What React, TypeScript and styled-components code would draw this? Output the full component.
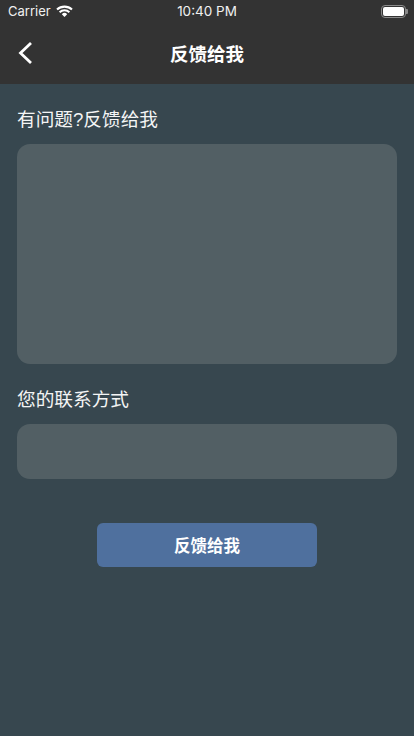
import React from "react";
import styled, { createGlobalStyle } from "styled-components";

const GlobalStyle = createGlobalStyle`
    html, body {
        margin: 0;
        padding: 0;
        background: #37474f;
        font-family: "Liberation Sans", "Noto Sans CJK SC", sans-serif;
    }
    * {
        box-sizing: border-box;
    }
`;

const Page = styled.div`
    width: 414px;
    height: 736px;
    overflow: hidden;
    background: #37474f;
    color: #fff;
`;

const Header = styled.header`
    background: #333333;
    height: 84px;
`;

const StatusBar = styled.div`
    height: 22px;
    padding: 0 8px;
    display: grid;
    grid-template-columns: 1fr auto 1fr;
    align-items: center;
    font-family: "Inter", "Liberation Sans", sans-serif;
    font-size: 13px;
    color: #f0f0f0;
`;

const StatusLeft = styled.div`
    display: flex;
    align-items: center;
    gap: 5px;
`;

const StatusTime = styled.span`
    font-size: 13.5px;
`;

const StatusRight = styled.div`
    display: flex;
    justify-content: flex-end;
`;

const Battery = styled.div`
    width: 25px;
    height: 13px;
    border: 1px solid #8a8a8a;
    border-radius: 4px;
    padding: 1px;
    position: relative;
    &::before {
        content: "";
        display: block;
        height: 100%;
        background: #fff;
        border-radius: 2px;
    }
    &::after {
        content: "";
        position: absolute;
        right: -3px;
        top: 3px;
        width: 2px;
        height: 5px;
        background: #8a8a8a;
        border-radius: 0 1px 1px 0;
    }
`;

const NavBar = styled.div`
    height: 62px;
    padding: 0 17px;
    display: grid;
    grid-template-columns: 1fr auto 1fr;
    align-items: center;
`;

const BackButton = styled.button`
    background: none;
    border: 0;
    padding: 0;
    display: flex;
    width: 16px;
    height: 24px;
`;

const Title = styled.h1`
    margin: 0;
    font-size: 18.5px;
    font-weight: 700;
    font-family: "Noto Sans CJK SC", sans-serif;
`;

const Form = styled.main`
    padding: 23px 17px 0;
    display: flex;
    flex-direction: column;
`;

const FieldLabel = styled.label`
    font-size: 18.67px;
    line-height: 26px;
    height: 26px;
    color: #f4f5f5;
    font-family: "Liberation Sans", "Noto Sans CJK SC", sans-serif;
    margin-bottom: 11px;
`;

const Input = styled.div<{ $height: number }>`
    height: ${props => props.$height}px;
    background: #525f64;
    border-radius: 13px;
    margin-bottom: 23px;
`;

const SubmitButton = styled.button`
    align-self: center;
    width: 220px;
    height: 44px;
    margin-top: 21px;
    background: #4f709e;
    border: 0;
    border-radius: 6px;
    color: #fff;
    font-size: 16.5px;
    font-weight: 700;
    font-family: "Noto Sans CJK SC", sans-serif;
`;

export default function App() {
    return (
        <Page>
            <GlobalStyle />
            <Header>
                <StatusBar>
                    <StatusLeft>
                        Carrier
                        <svg width="17" height="12" viewBox="0 0 17 12">
                            <path d="M1 4.6a11 11 0 0 1 15 0M3.6 7.2a7.2 7.2 0 0 1 9.8 0" fill="none" stroke="#fff" strokeWidth="2.1" />
                            <path d="M5.8 9.2a3.8 3.8 0 0 1 5.4 0L8.5 12z" fill="#fff" />
                        </svg>
                    </StatusLeft>
                    <StatusTime>10:40 PM</StatusTime>
                    <StatusRight>
                        <Battery />
                    </StatusRight>
                </StatusBar>
                <NavBar>
                    <BackButton>
                        <svg width="16" height="24" viewBox="0 0 16 24">
                            <path d="M14 2L3.5 12 14 22" fill="none" stroke="#fff" strokeWidth="2.8" />
                        </svg>
                    </BackButton>
                    <Title>反馈给我</Title>
                </NavBar>
            </Header>
            <Form>
                <FieldLabel>有问题?反馈给我</FieldLabel>
                <Input $height={220} />
                <FieldLabel>您的联系方式</FieldLabel>
                <Input $height={55} />
                <SubmitButton>反馈给我</SubmitButton>
            </Form>
        </Page>
    );
}
